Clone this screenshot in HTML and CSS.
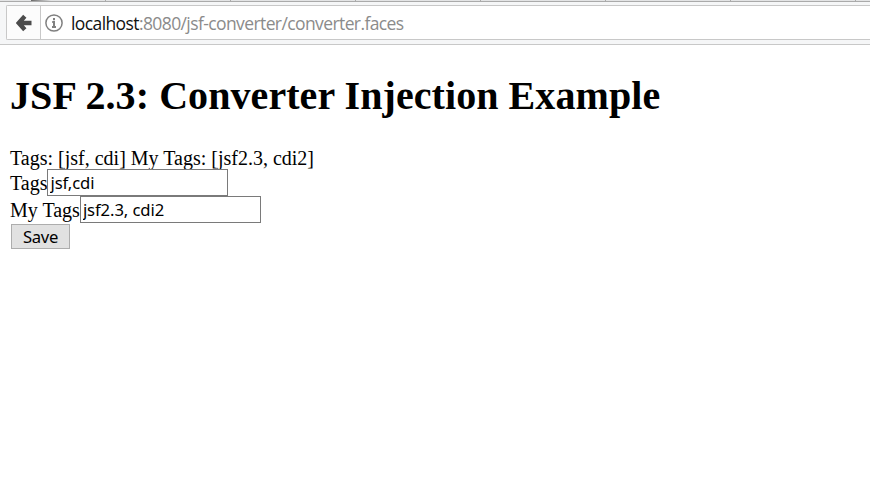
FILE: index.html
```html
<!DOCTYPE html>
<html lang="en">
<head>
<meta charset="utf-8">
<title>JSF 2.3: Converter Injection Example</title>
<link rel="stylesheet" href="styles.css">
</head>
<body>
<header class="chrome">
  <div class="tabs"><i class="tab tab-first"></i><i class="tab tab-active"></i><i class="tab"></i><i class="tab"></i><i class="tab"></i><i class="tab"></i><i class="tab"></i><i class="tab"></i></div>
  <nav class="toolbar">
    <button class="back" type="button" aria-label="Back">
      <svg width="16" height="18" viewBox="0 0 16 18"><path d="M8.8 2.2 2.8 9l6 6.8M3 9h12.5" fill="none" stroke="#4c4c4c" stroke-width="4.4"/></svg>
    </button>
    <div class="address">
      <svg class="info" width="18" height="18" viewBox="0 0 18 18"><circle cx="9" cy="9" r="8.1" fill="none" stroke="#808080" stroke-width="1.5"/><path d="M9 4v2.2M7.2 8h1.8v5M7 13h4" fill="none" stroke="#808080" stroke-width="2"/></svg>
      <span class="url"><span class="host">localhost</span>:8080/jsf-converter/converter.faces</span>
    </div>
  </nav>
</header>
<main class="page">
  <h1 class="title">JSF 2.3: Converter Injection Example</h1>
  <form>
    <p class="summary">Tags: [jsf, cdi] My Tags: [jsf2.3, cdi2]</p>
    <div class="row"><label for="tags">Tags</label><input class="field" id="tags" value="jsf,cdi"></div>
    <div class="row"><label for="my-tags">My Tags</label><input class="field" id="my-tags" value="jsf2.3, cdi2"></div>
    <button class="save" type="button">Save</button>
  </form>
</main>
</body>
</html>
```
FILE: styles.css
```css
* { box-sizing: border-box; }
body { margin: 0; background: #fff; color: #000; font: 20px/23px "Liberation Serif", serif; overflow: hidden; }
.chrome { height: 45px; background: #f5f6f7; border-bottom: 1px solid #c8c8c8; }
.tabs { display: flex; height: 2px; background: #e3e4e5; border-bottom: 1px solid #aaa; overflow: hidden; }
.tab { flex: 0 0 125px; border-right: 1px solid #aaa; }
.tab-first { flex-basis: 31px; border: 0; }
.tab-active { flex-basis: 75px; background: linear-gradient(90deg, #666, #e3e4e5 20px); }
.toolbar { display: flex; height: 35px; margin: 3px 0 0 6px; border: 1px solid #c8c8c8; border-right: 0; border-radius: 2px 0 0 2px; background: #fff; }
.back { display: flex; align-items: center; width: 34px; padding: 0 0 0 9px; border: 0; border-right: 1px solid #c8c8c8; background: #fcfcfc; }
.address { display: flex; align-items: center; padding-left: 4px; }
.info { margin-right: 8px; }
.url { padding-top: 1px; font: 17.5px/30px "Open Sans", sans-serif; letter-spacing: -.6px; color: #8b8b8b; white-space: nowrap; }
.host { color: #111; }
.page { padding: 28px 10px 0; }
.title { margin: 0 0 27px; font-size: 40px; line-height: 46px; letter-spacing: .07px; }
.summary { margin: 0; line-height: 24px; height: 23px; }
.row { display: flex; height: 27px; line-height: 28px; }
.field { width: 181px; height: 27px; padding: 0 2px; border: 1px solid #7a7a7a; background: #fff; color: #000; font: 16.67px "Noto Sans", sans-serif; letter-spacing: -.1px; }
.save { display: block; width: 59px; height: 25px; margin: 1px 0 0 1px; padding: 0; border: 1px solid #adadad; background: #e1e1e1; color: #000; font: 16.67px/22px "Noto Sans", sans-serif; letter-spacing: -.3px; }
```
